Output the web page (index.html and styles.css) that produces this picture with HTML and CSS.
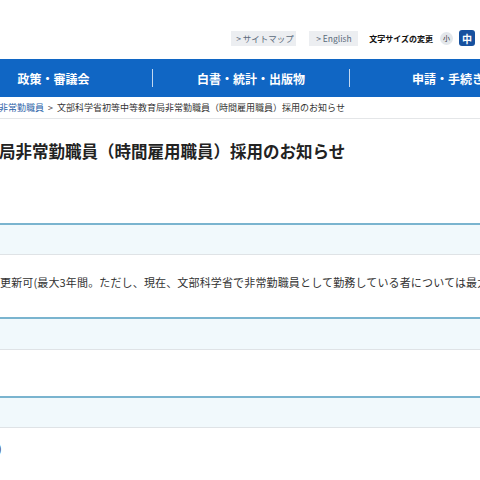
FILE: index.html
```html
<!DOCTYPE html>
<html lang="ja">

<head>
  <meta charset="utf-8">
  <title>文部科学省初等中等教育局非常勤職員（時間雇用職員）採用のお知らせ</title>
  <link rel="stylesheet" href="styles.css">
</head>

<body>
  <!-- ヘッダー -->
  <header class="site-head">
    <div class="head-tools">
      <a class="util-link util-sitemap" href="#">&gt; サイトマップ</a>
      <a class="util-link util-english" href="#">&gt; English</a>
      <span class="size-label">文字サイズの変更</span>
      <span class="size-btn size-small">小</span>
      <span class="size-btn size-mid">中</span>
    </div>
  </header>

  <!-- グローバルナビ -->
  <nav class="global-nav">
    <a class="nav-item nav-first" href="#">政策・審議会</a>
    <span class="nav-sep"></span>
    <a class="nav-item" href="#">白書・統計・出版物</a>
    <span class="nav-sep"></span>
    <a class="nav-item" href="#">申請・手続き</a>
  </nav>

  <!-- パンくず -->
  <div class="breadcrumb">
    <a class="crumb-link" href="#">非常勤職員</a>
    <span class="crumb-arrow">&gt;</span>
    <span class="crumb-current">文部科学省初等中等教育局非常勤職員（時間雇用職員）採用のお知らせ</span>
  </div>

  <main class="content">
    <h1 class="page-title">局非常勤職員（時間雇用職員）採用のお知らせ</h1>

    <div class="info-table">
      <div class="row-head"></div>
      <div class="row-body row-tall">
        <p>更新可(最大3年間。ただし、現在、文部科学省で非常勤職員として勤務している者については最大</p>
      </div>
      <div class="row-head row-head-wide"></div>
      <div class="row-body row-short"></div>
      <div class="row-head"></div>
      <div class="row-body">
        <p class="clipped">)</p>
      </div>
    </div>
  </main>
</body>

</html>
```

FILE: styles.css
```css
/* 全体 */
body {
  margin: 0;
  width: 480px;
  overflow: hidden;
  font-family: "Noto Sans CJK JP", "Noto Sans", sans-serif;
  color: #333;
  background: #fff;
}

a {
  text-decoration: none;
}

/* ヘッダー */
.site-head {
  height: 59px;
}

.head-tools {
  display: flex;
  align-items: center;
  justify-content: flex-end;
  padding-top: 30px;
  padding-right: 5px;
}

.util-link {
  height: 15px;
  line-height: 15px;
  background: #eceef1;
  color: #5b6b7c;
  font-size: 8.5px;
  box-sizing: border-box;
  padding-left: 5px;
  white-space: nowrap;
}

.util-sitemap {
  width: 65px;
  margin-right: 13px;
}

.util-english {
  width: 49px;
  margin-right: 11px;
  padding-left: 7px;
}

.size-label {
  font-size: 8px;
  font-weight: bold;
  color: #111;
  margin-right: 7px;
}

.size-btn {
  display: flex;
  align-items: center;
  justify-content: center;
}

.size-small {
  width: 13px;
  height: 13px;
  border-radius: 50%;
  background: #e3e7eb;
  font-size: 7px;
  color: #333;
  margin-right: 6px;
}

.size-mid {
  width: 16px;
  height: 16px;
  border-radius: 3px;
  background: #17519f;
  color: #fff;
  font-size: 10px;
  font-weight: bold;
}

/* グローバルナビ */
.global-nav {
  display: flex;
  align-items: center;
  height: 38px;
  background: #1066c4;
  margin-left: -45px;
  width: 600px;
}

.nav-item {
  width: 196px;
  text-align: center;
  color: #fff;
  font-size: 12px;
  font-weight: bold;
}

.nav-first {
  width: 197px;
}

.nav-sep {
  width: 1px;
  height: 18px;
  background: rgba(255, 255, 255, 0.75);
}

/* パンくず */
.breadcrumb {
  height: 21px;
  line-height: 21px;
  font-size: 9px;
  border-bottom: 1px solid #e4e6e8;
  margin-left: -1px;
  white-space: nowrap;
}

.crumb-link {
  color: #2a62a8;
}

.crumb-arrow {
  margin: 0 2px;
  color: #444;
}

/* 本文 */
.page-title {
  margin: 20px 0 0 -1px;
  font-size: 16.5px;
  line-height: 24px;
  color: #222;
  white-space: nowrap;
}

.info-table {
  margin-top: 60px;
}

.row-head {
  height: 29px;
  background: #f1f9fc;
  border-top: 2px solid #7ab4cf;
  border-bottom: 1px solid #dfe3e6;
}

.row-head-wide {
  height: 30px;
}

.row-body {
  height: 60px;
  font-size: 11px;
}

.row-body p {
  margin: 0;
  padding-top: 19px;
  white-space: nowrap;
  letter-spacing: 0.15px;
}

.row-tall {
  height: 62px;
}

.row-short {
  height: 46px;
}

.row-body .clipped {
  padding-top: 12px;
  margin-left: -2px;
}
```
